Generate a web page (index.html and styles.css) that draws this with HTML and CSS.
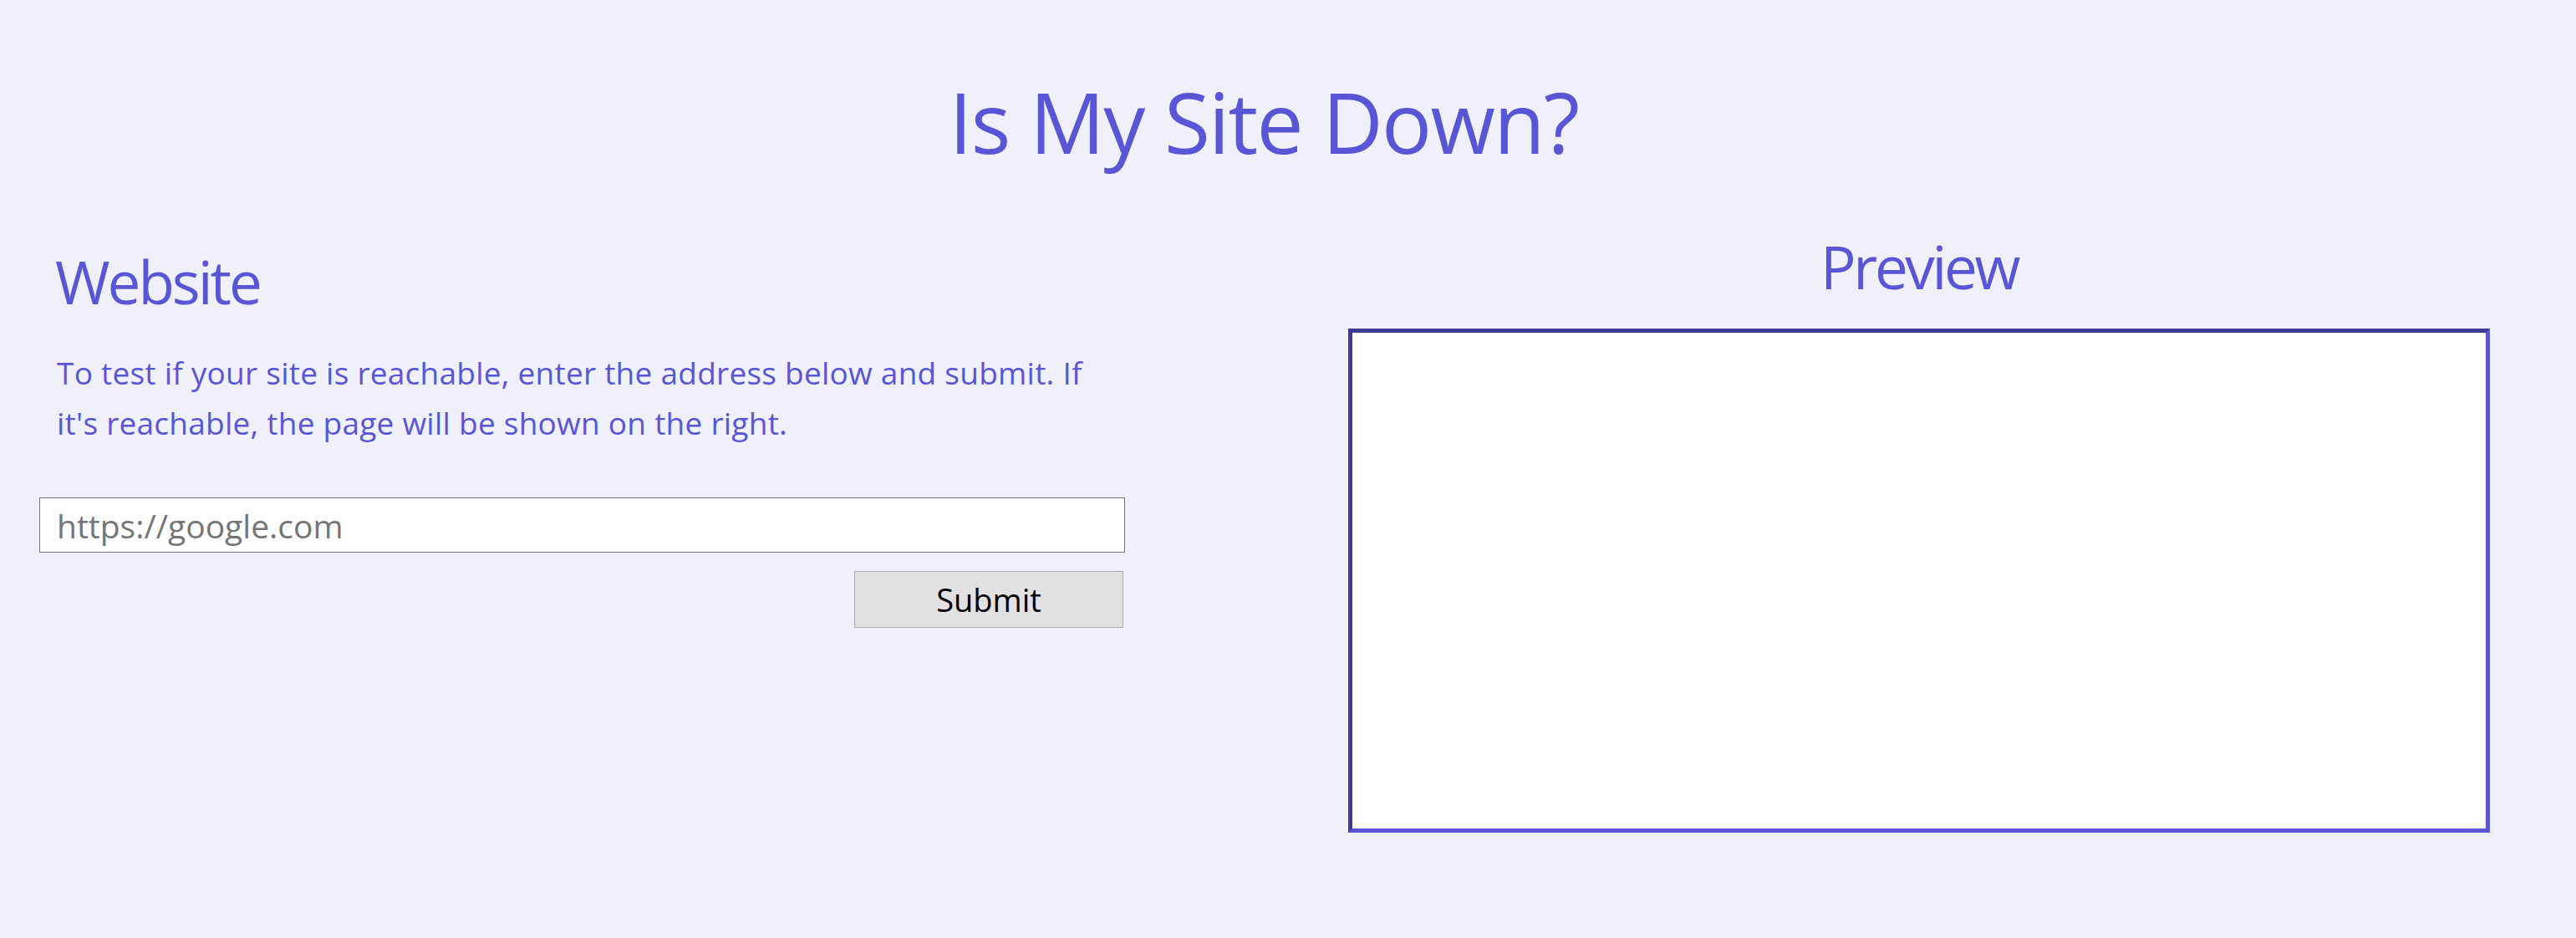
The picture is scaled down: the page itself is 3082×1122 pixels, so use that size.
FILE: index.html
```html
<!DOCTYPE html>
<html lang="en">
<head>
<meta charset="utf-8">
<title>Is My Site Down?</title>
<link rel="stylesheet" href="styles.css">
</head>
<body>
<div class="page">
  <h1 class="title">Is My Site Down?</h1>
  <div class="columns">
    <section class="left">
      <h2 class="heading heading-left">Website</h2>
      <p class="intro">To test if your site is reachable, enter the address below and submit. If it's reachable, the page will be shown on the right.</p>
      <form class="site-form">
        <input class="url-input" type="text" placeholder="https://google.com">
        <div class="actions">
          <button class="submit" type="button">Submit</button>
        </div>
      </form>
    </section>
    <section class="right">
      <h2 class="heading heading-right">Preview</h2>
      <div class="preview-frame"></div>
    </section>
  </div>
</div>
</body>
</html>
```
FILE: styles.css
```css
html, body {
  margin: 0;
  padding: 0;
  background: #f0f0fa;
}
body {
  font-family: "Open Sans", "Noto Sans", sans-serif;
  color: #5856d6;
}
.page {
  width: 2934px;
  padding-left: 45px;
}
.title {
  margin: 0;
  padding-top: 85px;
  font-size: 100px;
  line-height: 120px;
  font-weight: 400;
  letter-spacing: -1.7px;
  text-align: center;
  color: #5856d6;
}
.columns {
  display: flex;
  gap: 267px;
  margin-top: 55px;
}
.left {
  width: 1301px;
  flex: none;
}
.right {
  width: 1366px;
  flex: none;
}
.heading {
  margin: 0;
  font-size: 71px;
  line-height: 86px;
  font-weight: 400;
  letter-spacing: -3px;
  color: #5856d6;
}
.heading-left {
  margin-top: 34px;
  padding-left: 21px;
}
.heading-right {
  margin-top: 16px;
  text-align: center;
  letter-spacing: -3.4px;
}
.intro {
  margin: 36px 0 0;
  padding: 0 21px 0 23px;
  font-size: 37px;
  line-height: 60px;
  letter-spacing: 0.25px;
}
.site-form {
  margin-top: 59px;
  display: flex;
  flex-direction: column;
}
.url-input {
  box-sizing: border-box;
  margin: 0 0 0 2px;
  width: 1299px;
  height: 66px;
  border: 1px solid #767676;
  background: #fff;
  padding: 0 20px;
  font-family: "Open Sans", "Noto Sans", sans-serif;
  font-size: 39px;
  color: #222;
  outline: none;
}
.url-input::placeholder {
  color: #757575;
}
.actions {
  display: flex;
  justify-content: flex-end;
  padding-right: 2px;
  margin-top: 22px;
}
.submit {
  box-sizing: border-box;
  width: 322px;
  height: 68px;
  background: #e1e1e1;
  border: 1px solid #adadad;
  border-radius: 0;
  font-family: "Open Sans", "Noto Sans", sans-serif;
  font-size: 38px;
  color: #000;
  padding: 0;
}
.preview-frame {
  box-sizing: border-box;
  margin-top: 31px;
  width: 1366px;
  height: 603px;
  background: #fff;
  border: 5px solid;
  border-color: #3c3a93 #5856d6 #5856d6 #3c3a93;
}
```
